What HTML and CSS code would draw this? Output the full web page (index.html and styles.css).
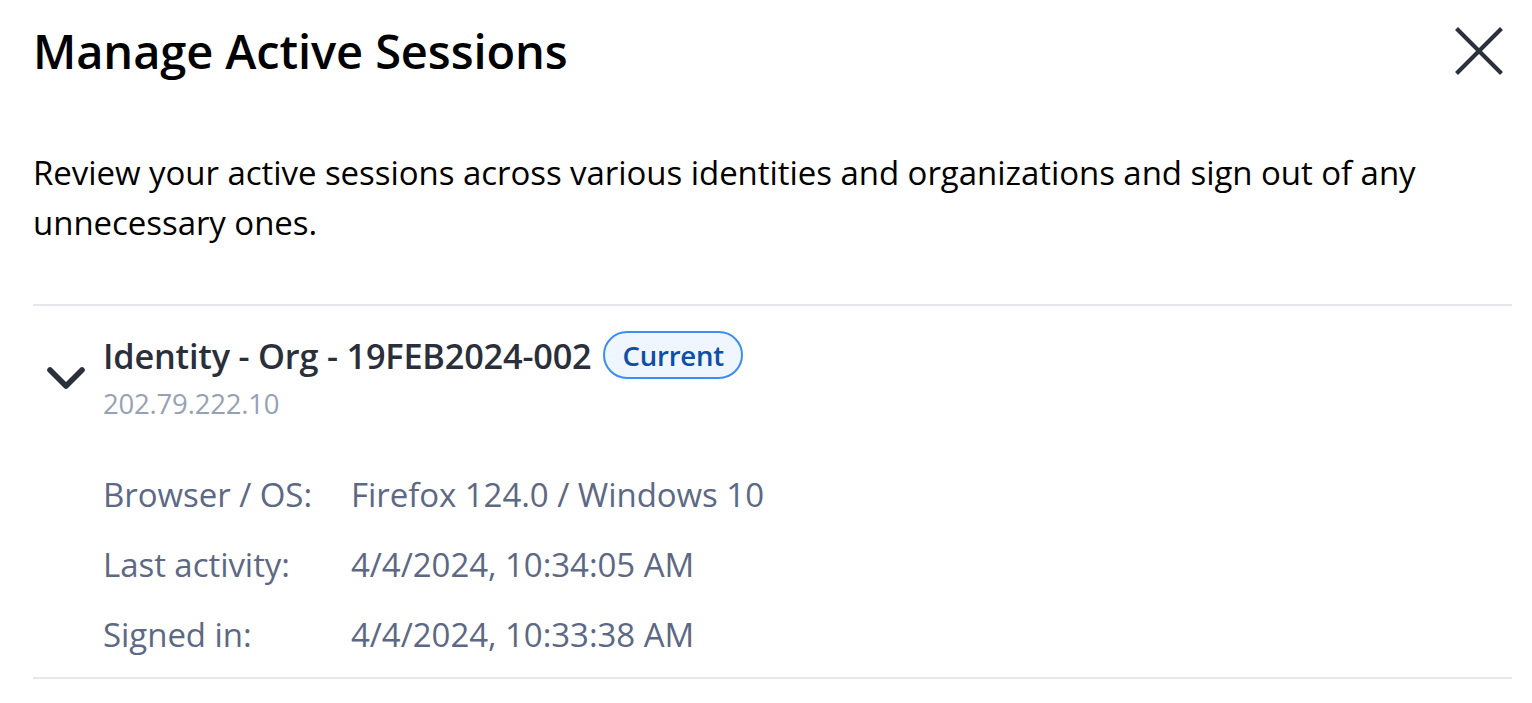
FILE: index.html
```html
<!DOCTYPE html>
<html lang="en">
<head>
<meta charset="utf-8">
<title>Manage Active Sessions</title>
<link rel="stylesheet" href="styles.css">
</head>
<body>
<div class="dialog">
  <div class="header">
    <h1 class="title">Manage Active Sessions</h1>
    <button class="close" aria-label="Close">
      <svg width="48" height="48" viewBox="0 0 48 48"><path d="M3 3 L45 45 M45 3 L3 45" stroke="#2a303c" stroke-width="4.2" stroke-linecap="square" fill="none"/></svg>
    </button>
  </div>
  <p class="desc">Review your active sessions across various identities and organizations and sign out of any unnecessary ones.</p>
  <div class="session">
    <div class="session-head">
      <span class="chevron">
        <svg width="40" height="28" viewBox="0 0 40 28"><path d="M4 5 L20 21 L36 5" stroke="#2a303c" stroke-width="5.6" stroke-linecap="round" stroke-linejoin="round" fill="none"/></svg>
      </span>
      <div class="session-info">
        <div class="session-title-row">
          <span class="session-name">Identity - Org - 19FEB2024-002</span>
          <span class="badge">Current</span>
        </div>
        <div class="ip">202.79.222.10</div>
      </div>
    </div>
    <dl class="details">
      <dt>Browser / OS:</dt><dd>Firefox 124.0 / Windows 10</dd>
      <dt>Last activity:</dt><dd>4/4/2024, 10:34:05 AM</dd>
      <dt>Signed in:</dt><dd>4/4/2024, 10:33:38 AM</dd>
    </dl>
  </div>
</div>
</body>
</html>
```
FILE: styles.css
```css
* { box-sizing: border-box; }
html, body { margin: 0; padding: 0; background: #fff; }
body { font-family: "Open Sans", "Noto Sans", sans-serif; color: #000; }
.dialog { padding: 20px 20px 0 33px; }
.header { display: flex; justify-content: space-between; align-items: center; height: 62px; }
.title { margin: 0; font-size: 47px; font-weight: 600; letter-spacing: -0.1px; }
.close { background: none; border: 0; padding: 0; margin-right: 9px; display: flex; width: 48px; height: 48px; }
.desc { margin: 66px 0 0; font-size: 33px; line-height: 50px; letter-spacing: -0.05px; }
.session { margin-top: 56px; border-top: 2px solid #e5e7eb; border-bottom: 2px solid #e5e7eb; padding: 25px 0 18px; }
.session-head { display: flex; align-items: center; }
.chevron { width: 70px; display: flex; padding-left: 13px; margin-top: 5px; }
.session-info { display: flex; flex-direction: column; }
.session-title-row { display: flex; align-items: center; gap: 12px; }
.session-name { font-size: 34.3px; font-weight: 600; color: #2a2f3b; letter-spacing: -0.2px; }
.badge { display: inline-flex; align-items: center; height: 48px; padding: 0 17px; border: 2px solid #3d8ef0; border-radius: 24px; background: #eff6ff; color: #0d4fa8; font-size: 27.5px; font-weight: 600; letter-spacing: -0.2px; }
.ip { font-size: 27.5px; color: #97a1b4; margin-top: 6px; letter-spacing: -0.2px; }
.details { display: grid; grid-template-columns: 248px auto; row-gap: 22px; margin: 49px 0 0 70px; font-size: 33px; line-height: 48px; color: #5d6884; letter-spacing: -0.05px; }
.details dt, .details dd { margin: 0; }
```
